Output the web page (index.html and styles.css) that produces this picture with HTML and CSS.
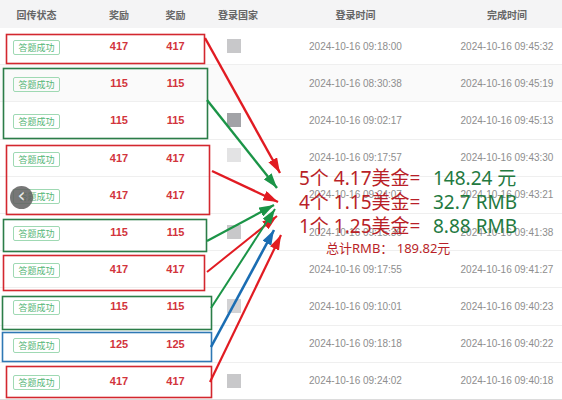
FILE: index.html
```html
<!DOCTYPE html>
<html lang="zh-CN">
<head>
<meta charset="utf-8">
<title>回传记录</title>
<link rel="stylesheet" href="styles.css">
</head>
<body>
<div class="page">
  <div class="table">
    <div class="row head">
      <div class="cell c1">回传状态</div>
      <div class="cell c2">奖励</div>
      <div class="cell c3">奖励</div>
      <div class="cell c4 hc">登录国家</div>
      <div class="cell c5">登录时间</div>
      <div class="cell c6">完成时间</div>
    </div>
    <div class="row">
      <div class="cell c1"><span class="tag">答题成功</span></div>
      <div class="cell c2 num">417</div><div class="cell c3 num">417</div>
      <div class="cell c4"><span class="flag f-mid"></span></div>
      <div class="cell c5 time">2024-10-16 09:18:00</div><div class="cell c6 time">2024-10-16 09:45:32</div>
    </div>
    <div class="row alt">
      <div class="cell c1"><span class="tag">答题成功</span></div>
      <div class="cell c2 num">115</div><div class="cell c3 num">115</div>
      <div class="cell c4"></div>
      <div class="cell c5 time">2024-10-16 08:30:38</div><div class="cell c6 time">2024-10-16 09:45:19</div>
    </div>
    <div class="row">
      <div class="cell c1"><span class="tag">答题成功</span></div>
      <div class="cell c2 num">115</div><div class="cell c3 num">115</div>
      <div class="cell c4"><span class="flag f-dark"></span></div>
      <div class="cell c5 time">2024-10-16 09:02:17</div><div class="cell c6 time">2024-10-16 09:45:13</div>
    </div>
    <div class="row">
      <div class="cell c1"><span class="tag">答题成功</span></div>
      <div class="cell c2 num">417</div><div class="cell c3 num">417</div>
      <div class="cell c4 up"><span class="flag f-light"></span></div>
      <div class="cell c5 time">2024-10-16 09:17:57</div><div class="cell c6 time">2024-10-16 09:43:30</div>
    </div>
    <div class="row">
      <div class="cell c1"><span class="tag">答题成功</span></div>
      <div class="cell c2 num">417</div><div class="cell c3 num">417</div>
      <div class="cell c4"></div>
      <div class="cell c5 time">2024-10-16 09:24:07</div><div class="cell c6 time">2024-10-16 09:43:21</div>
    </div>
    <div class="row">
      <div class="cell c1"><span class="tag">答题成功</span></div>
      <div class="cell c2 num">115</div><div class="cell c3 num">115</div>
      <div class="cell c4"><span class="flag f-mid"></span></div>
      <div class="cell c5 time">2024-10-16 09:15:36</div><div class="cell c6 time">2024-10-16 09:41:38</div>
    </div>
    <div class="row">
      <div class="cell c1"><span class="tag">答题成功</span></div>
      <div class="cell c2 num">417</div><div class="cell c3 num">417</div>
      <div class="cell c4"></div>
      <div class="cell c5 time">2024-10-16 09:17:55</div><div class="cell c6 time">2024-10-16 09:41:27</div>
    </div>
    <div class="row">
      <div class="cell c1"><span class="tag">答题成功</span></div>
      <div class="cell c2 num">115</div><div class="cell c3 num">115</div>
      <div class="cell c4"><span class="flag f-soft"></span></div>
      <div class="cell c5 time">2024-10-16 09:10:01</div><div class="cell c6 time">2024-10-16 09:40:23</div>
    </div>
    <div class="row">
      <div class="cell c1"><span class="tag">答题成功</span></div>
      <div class="cell c2 num">125</div><div class="cell c3 num">125</div>
      <div class="cell c4"></div>
      <div class="cell c5 time">2024-10-16 09:18:18</div><div class="cell c6 time">2024-10-16 09:40:22</div>
    </div>
    <div class="row last">
      <div class="cell c1"><span class="tag">答题成功</span></div>
      <div class="cell c2 num">417</div><div class="cell c3 num">417</div>
      <div class="cell c4"><span class="flag f-mid"></span></div>
      <div class="cell c5 time">2024-10-16 09:24:02</div><div class="cell c6 time">2024-10-16 09:40:18</div>
    </div>
  </div>

  <svg class="annot" width="562" height="400" viewBox="0 0 562 400">
    <defs>
      <marker id="hr" markerUnits="userSpaceOnUse" markerWidth="16" markerHeight="10" refX="15" refY="5" orient="auto"><path d="M0,0 L15,5 L0,10 Z" fill="#e11b22"/></marker>
      <marker id="hg" markerUnits="userSpaceOnUse" markerWidth="16" markerHeight="10" refX="15" refY="5" orient="auto"><path d="M0,0 L15,5 L0,10 Z" fill="#1b9447"/></marker>
      <marker id="hb" markerUnits="userSpaceOnUse" markerWidth="16" markerHeight="10" refX="15" refY="5" orient="auto"><path d="M0,0 L15,5 L0,10 Z" fill="#1a6db3"/></marker>
    </defs>
    <g fill="none" stroke-width="1.6">
      <rect x="6.5" y="34.5" width="198" height="29" stroke="#d3272e"/>
      <rect x="3.5" y="68.5" width="204" height="70" stroke="#2b7d48"/>
      <rect x="6.5" y="145.5" width="203" height="69" stroke="#d3272e"/>
      <rect x="3.5" y="219.5" width="203" height="32" stroke="#2b7d48"/>
      <rect x="3.5" y="255.5" width="201" height="35" stroke="#d3272e"/>
      <rect x="2.5" y="296.5" width="209" height="33" stroke="#2b7d48"/>
      <rect x="2.5" y="332.5" width="209" height="29" stroke="#2f78b4"/>
      <rect x="6.5" y="366.5" width="205" height="31" stroke="#d3272e"/>
    </g>
    <g fill="none">
      <line x1="205" y1="38" x2="280" y2="173" stroke="#e11b22" stroke-width="2.4" marker-end="url(#hr)"/>
      <line x1="207" y1="100" x2="277" y2="188" stroke="#1b9447" stroke-width="2.4" marker-end="url(#hg)"/>
      <line x1="212" y1="171" x2="278" y2="202" stroke="#e11b22" stroke-width="2.4" marker-end="url(#hr)"/>
      <line x1="207" y1="241" x2="274" y2="205" stroke="#1b9447" stroke-width="2.2" marker-end="url(#hg)"/>
      <line x1="207" y1="272" x2="277" y2="216" stroke="#e11b22" stroke-width="2" marker-end="url(#hr)"/>
      <line x1="211" y1="308" x2="275" y2="209" stroke="#1b9447" stroke-width="2" marker-end="url(#hg)"/>
      <line x1="211" y1="347" x2="274" y2="230" stroke="#1a6db3" stroke-width="2.6" marker-end="url(#hb)"/>
      <line x1="210" y1="382" x2="281" y2="235" stroke="#e11b22" stroke-width="2.2" marker-end="url(#hr)"/>
    </g>
  </svg>

  <div class="calc">
    <div class="eq">
      <span class="lhs">5个 4.17美金=</span><span class="rhs">148.24 元</span>
      <span class="lhs">4个 1.15美金=</span><span class="rhs">32.7 RMB</span>
      <span class="lhs">1个 1.25美金=</span><span class="rhs">8.88 RMB</span>
    </div>
    <div class="total">总计RMB： 189.82元</div>
  </div>

  <div class="prev">&lsaquo;</div>
</div>
</body>
</html>
```

FILE: styles.css
```css
* { box-sizing: border-box; }
html, body { margin: 0; padding: 0; background: #fff; }
body { font-family: "Liberation Sans", "Noto Sans CJK SC", sans-serif; }

.page {
  position: relative;
  width: 562px;
  height: 400px;
  overflow: hidden;
}

.table { display: flex; flex-direction: column; }

.row {
  display: flex;
  align-items: center;
  height: 37.2px;
  border-bottom: 1px solid #efefef;
}
.row.alt { background: #fafafa; }
.row.last { border-bottom-color: #dcdcdc; }

.row.head {
  height: 28px;
  background: #f4f4f5;
  border-bottom: none;
  font-family: "Noto Sans CJK SC", sans-serif;
  font-size: 10px;
  font-weight: bold;
  color: #666;
}

.cell { text-align: center; white-space: nowrap; }
.c1 { width: 73px; }
.c2 { width: 54px; margin-left: 19px; }
.c3 { width: 55px; margin-left: 2px; }
.c4 { width: 60px; margin-left: 5px; display: flex; }
.c4.hc { display: block; }
.c5 { width: 119px; margin-left: 28px; }
.c6 { width: 110px; margin-left: 37px; }

.tag {
  display: inline-block;
  width: 47px;
  height: 15px;
  line-height: 13px;
  border: 1px solid #9fd9b3;
  border-radius: 2px;
  color: #56b677;
  font-family: "Noto Sans CJK SC", sans-serif;
  font-size: 9px;
  text-align: center;
}

.num {
  color: #d2343c;
  font-weight: bold;
  font-size: 11px;
}

.flag {
  display: block;
  width: 14px;
  height: 14px;
  margin-left: 19px;
  background: #c8c8ca;
}
.up .flag { margin-top: -6px; }
.f-dark { background: #a2a3a7; }
.f-light { background: #e3e3e4; }
.f-soft { background: #d2d2d4; }

.time {
  color: #8e8e8e;
  font-size: 10px;
}

.annot {
  position: absolute;
  left: 0;
  top: 0;
}

.calc {
  position: absolute;
  left: 299px;
  top: 166px;
  font-family: "Noto Sans", "Noto Sans CJK SC", sans-serif;
}
.eq {
  display: grid;
  grid-template-columns: 134px auto;
  font-size: 19px;
  line-height: 24px;
  white-space: nowrap;
}
.lhs { color: #b91f28; }
.rhs { color: #23793f; }
.total {
  margin-top: 1px;
  padding-left: 27px;
  font-size: 13px;
  line-height: 18px;
  color: #b91f28;
  white-space: nowrap;
}

.prev {
  position: absolute;
  left: 10px;
  top: 186px;
  width: 23px;
  height: 23px;
  border-radius: 50%;
  background: rgba(95, 95, 95, 0.85);
  color: #e8e8e8;
  font-size: 20px;
  line-height: 19px;
  text-align: center;
  font-family: "DejaVu Sans", sans-serif;
}
```
